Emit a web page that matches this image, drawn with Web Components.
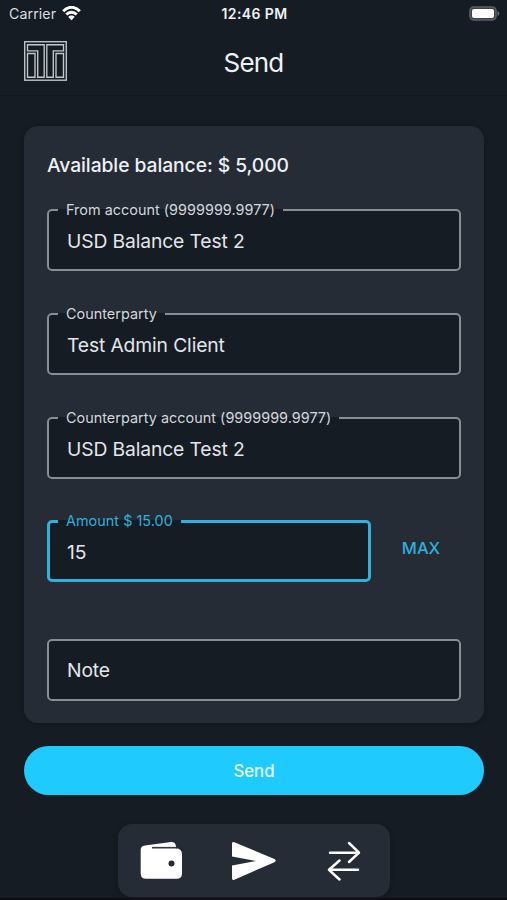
<!DOCTYPE html>
<html lang="en">
<head>
<meta charset="utf-8">
<title>Send</title>
<style>
html,body{margin:0;height:100%;background:#161c23}
body{font-family:Inter,"Liberation Sans",sans-serif;color:#edf1f5;overflow:hidden}
</style>
</head>
<body>
<send-screen></send-screen>
<script>
function define(name, html){
  const t=document.createElement('template');
  t.innerHTML=html;
  customElements.define(name,class extends HTMLElement{
    constructor(){super();this.attachShadow({mode:'open'}).append(t.content.cloneNode(true));}
  });
}

define('status-bar',`<style>
:host{display:grid;grid-template-columns:1fr auto 1fr;align-items:center;height:27px;padding:0 7px 0 9px;font-size:14px;box-sizing:border-box}
.l{display:flex;align-items:center;gap:6px;color:#d9dde1;font-size:14.2px;letter-spacing:.08px}
.t{font-weight:600;font-size:14px;letter-spacing:.4px}
.r{justify-self:end;display:flex}
svg{display:block}
</style>
<div class="l"><span>Carrier</span><svg width="19" height="15" viewBox="0 0 19 15" fill="none" stroke="#fff" stroke-width="2.9"><path d="M1.2 5.3C6-.1 13-.1 17.800 5.300M4.300 8.600c3-3.200 7.400-3.200 10.400 0"/><path d="M9.500 14.200 6.300 11c1.800-1.900 4.600-1.900 6.400 0z" fill="#fff" stroke="none"/></svg></div>
<span class="t">12:46 PM</span>
<div class="r"><svg width="31" height="15" viewBox="0 0 31 15"><rect x="1" y="1" width="26" height="13" rx="4" fill="#3c4248" stroke="#5b6066" stroke-width="1.600"/><rect x="3" y="3" width="22" height="9" rx="2" fill="#fff"/><path d="M28.500 5v5c2.300-.8 2.300-4.200 0-5z" fill="#6b7076"/></svg></div>`);

define('brand-logo',`<style>:host{display:block;width:43px;height:40px}svg{display:block}</style>
<svg width="43" height="40" viewBox="0 0 43 40" fill="none" stroke="#c3c8cc" stroke-width="1.350">
<rect x=".7" y=".7" width="41.600" height="38.500"/>
<path d="M3.500 3.700H20.200V36.200H13.700V9.800H3.500zM39.500 3.700H22.800V36.200H29.300V9.800H39.500z"/>
<path d="M3.500 36.200V12.500H11V36.200zM39.500 36.200V12.500H32V36.200z"/>
</svg>`);

define('app-header',`<style>
:host{display:grid;grid-template-columns:43px 1fr 43px;align-items:center;height:69px;padding:0 24px;border-bottom:1px solid #13181f;box-sizing:border-box}
h1{margin:0;padding-top:3px;text-align:center;font-size:26px;font-weight:400;line-height:32px;letter-spacing:-.8px}
</style><brand-logo></brand-logo><h1><slot></slot></h1>`);

customElements.define('outlined-field',class extends HTMLElement{
  connectedCallback(){
    const label=this.getAttribute('label');
    this.attachShadow({mode:'open'}).innerHTML=`<style>
:host{display:block;height:62px;--line:#888e96;--w:2px}
:host([active]){--line:#2db1dd;--w:3px}
fieldset{box-sizing:border-box;height:100%;min-width:0;margin:0;padding:0 18px;border:var(--w) solid var(--line);border-radius:5px;background:#161c23;display:flex;align-items:center}
fieldset.labelled{height:71px;margin-top:-9px;padding-bottom:7px}
:host([active]) fieldset{padding-left:17px;padding-bottom:6px}
legend{margin-left:-9px;padding:0 8px;height:20px;line-height:20px;font-size:14.400px;letter-spacing:.03px;color:#d2d7dc;white-space:nowrap}
:host([active]) legend{color:#2db1dd}
.v{font-size:19.300px;line-height:26px;letter-spacing:-.13px;color:#e3e7eb;white-space:nowrap}
</style><fieldset class="${label?'labelled':''}">${label?`<legend>${label}</legend>`:''}<span class="v"><slot></slot></span></fieldset>`;
  }
});

define('text-button',`<style>:host{display:flex;align-items:center;justify-content:center;color:#2db1dd;font-size:16.500px;font-weight:500}</style><slot></slot>`);
define('primary-button',`<style>:host{display:flex;align-items:center;justify-content:center;height:49px;border-radius:25px;background:#1fcaff;color:#e6faff;font-size:16.800px;font-weight:500}</style><slot></slot>`);
define('form-card',`<style>:host{display:flex;flex-direction:column;box-sizing:border-box;height:597px;padding:25px 23px 22px;border-radius:14px;background:#262c35;box-shadow:0 1px 4px #11161c}</style><slot></slot>`);

define('nav-bar',`<style>
:host{display:flex;box-sizing:border-box;width:272px;height:73px;border-radius:14px;background:#262c35;align-items:center;padding:0 22px;box-shadow:0 1px 4px #11161c}
svg{display:block;flex:none}.p{margin-left:48px}.x{margin-left:50px}
</style>
<svg width="43" height="40" viewBox="0 0 43 40"><path d="M.7 8.500Q.9 5 5 4.400L31 1q4.500-.3 5 4.400V7.300q6 .6 6 6v19q0 5.500-5.500 5.500H6.200Q.7 37.800.7 32.300z" fill="#fff"/><path d="M12 6.700H37" stroke="#343b43" stroke-width="1.600"/><circle cx="31.500" cy="22.500" r="3" fill="#262c35"/></svg>
<svg class="p" width="46" height="40" viewBox="0 0 46 40"><path d="M1 2.500Q1 .2 3.300 1.200L43.500 18q2.500 1.600 0 3.200L3.300 38.700Q1 39.500 1 37.300V24.500L25 20 1 15.500z" fill="#fff"/></svg>
<svg class="x" width="34" height="40" viewBox="0 0 34 40" fill="none" stroke="#fff" stroke-width="2.500" stroke-linecap="round" stroke-linejoin="round"><path d="M3 11.700H32M22 2 32 11.700 22 21"/><path d="M31 28.800H2M12.500 19.500 2 28.800 12.500 38.500"/></svg>`);

define('send-screen',`<style>
:host{display:flex;flex-direction:column;height:900px;box-sizing:border-box;border-bottom:2px solid #0e0d13}
main{display:flex;flex-direction:column;padding:30px 23px 0 24px}
h2{margin:0;font-size:19.300px;line-height:28px;font-weight:500;padding-bottom:30px;letter-spacing:-.07px;color:#edf1f5}
outlined-field+outlined-field{margin-top:42px}
.amount{display:grid;grid-template-columns:324px 1fr;margin-top:41px}
text-button{padding-left:10px;height:55px}
.note{margin-top:57px}
primary-button{margin-top:23px}
nav-bar{margin:29px auto 0}
</style>
<status-bar></status-bar>
<app-header>Send</app-header>
<main>
<form-card>
<h2>Available balance: $ 5,000</h2>
<outlined-field label="From account (9999999.9977)">USD Balance Test 2</outlined-field>
<outlined-field label="Counterparty">Test Admin Client</outlined-field>
<outlined-field label="Counterparty account (9999999.9977)">USD Balance Test 2</outlined-field>
<div class="amount"><outlined-field active label="Amount $ 15.00">15</outlined-field><text-button>MAX</text-button></div>
<outlined-field class="note">Note</outlined-field>
</form-card>
<primary-button>Send</primary-button>
<nav-bar></nav-bar>
</main>`);
</script>
</body>
</html>
